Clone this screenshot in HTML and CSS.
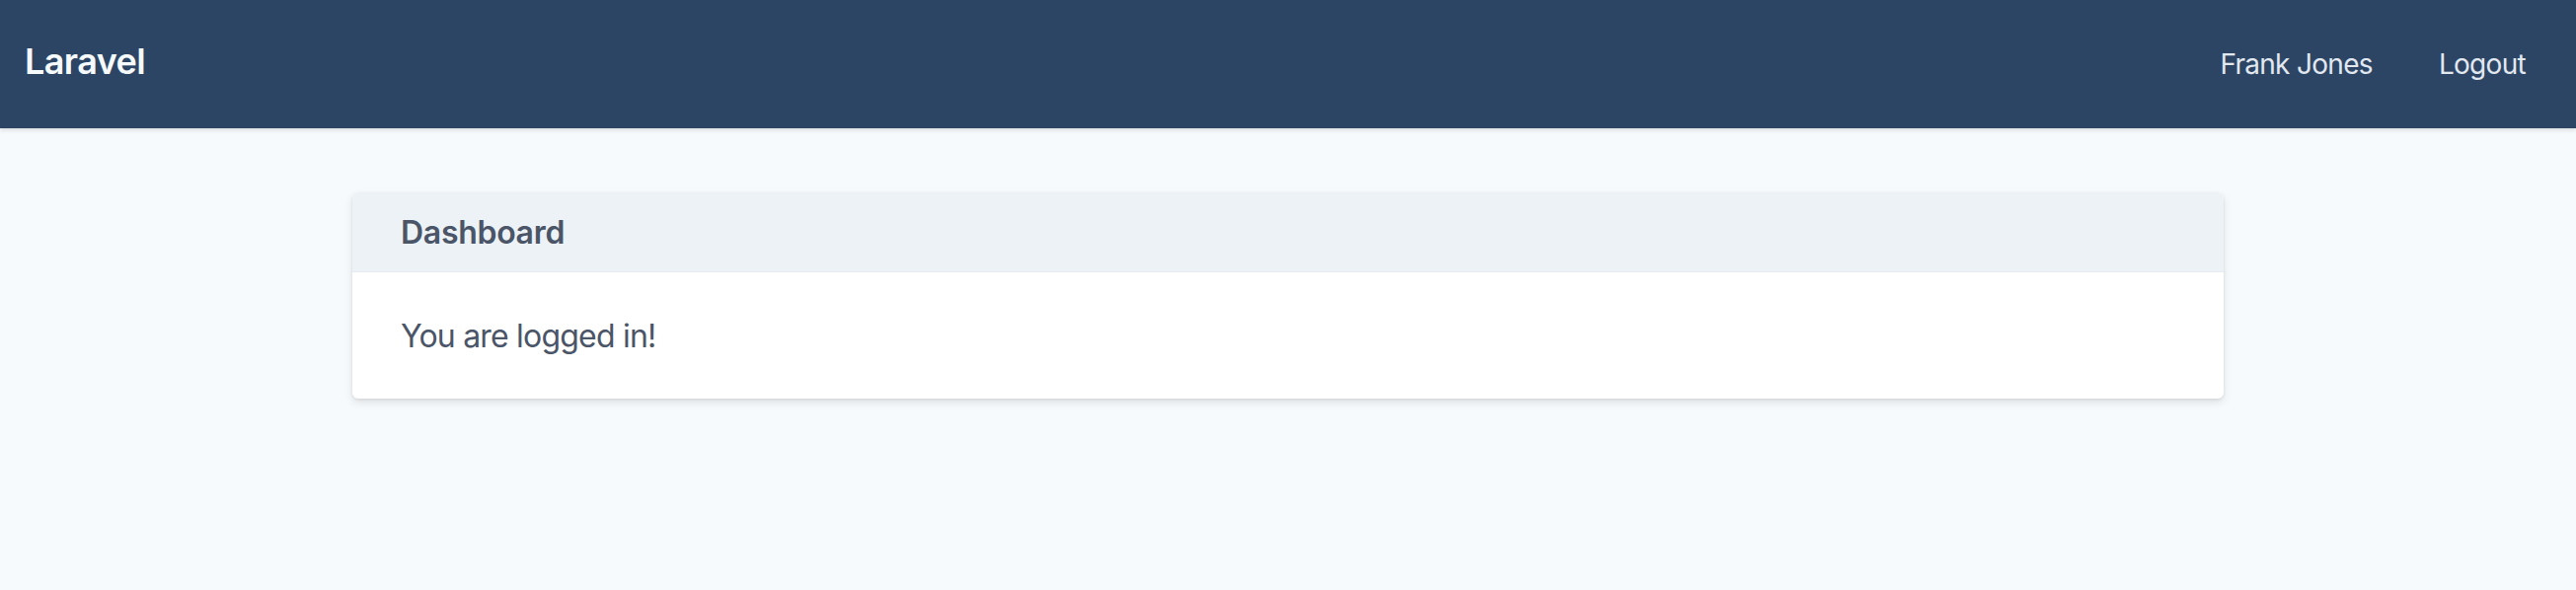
FILE: index.html
```html
<!DOCTYPE html>
<html>
<head>
<meta charset="utf-8">
<link rel="stylesheet" href="styles.css">
</head>
<body>
<nav class="nav">
  <a class="brand" href="#">Laravel</a>
  <div class="links">
    <span class="link">Frank Jones</span>
    <a class="link" href="#">Logout</a>
  </div>
</nav>
<main class="main">
  <div class="card">
    <div class="card-header">Dashboard</div>
    <div class="card-body">You are logged in!</div>
  </div>
</main>
</body>
</html>
```
FILE: styles.css
```css
* { box-sizing: border-box; }
html, body { margin: 0; padding: 0; }
body {
  background: #f7fafc;
  font-family: Inter, "Noto Sans", sans-serif;
  height: 598px;
  overflow: hidden;
}
a { text-decoration: none; color: inherit; }
.nav {
  height: 130px;
  background: #2c4565;
  display: flex;
  align-items: center;
  justify-content: space-between;
  padding: 0 51px 0 25px;
  box-shadow: 0 2px 4px rgba(0,0,0,0.12);
  position: relative;
}
.brand {
  color: #f7fafc;
  font-size: 36px;
  font-weight: 600;
  letter-spacing: -0.6px;
  margin-top: -6px;
}
.links {
  display: flex;
  gap: 67px;
  align-items: center;
}
.link {
  color: #e2e8f0;
  font-size: 28px;
  font-weight: 400;
  letter-spacing: -0.7px;
}
.main {
  display: flex;
  justify-content: center;
  padding-top: 65px;
}
.card {
  width: 1896px;
  background: #fff;
  border-radius: 6px;
  overflow: hidden;
  box-shadow: 0 4px 8px rgba(0,0,0,0.1), 0 1px 3px rgba(0,0,0,0.08);
}
.card-header {
  height: 81px;
  background: #edf2f7;
  color: #4a5568;
  font-size: 32px;
  font-weight: 600;
  letter-spacing: -0.3px;
  padding: 0 49px;
  display: flex;
  align-items: center;
  border-bottom: 1px solid #e6ebf1;
}
.card-body {
  height: 128px;
  color: #4a5568;
  font-size: 32px;
  letter-spacing: -0.8px;
  padding: 0 49px;
  display: flex;
  align-items: center;
}
```
